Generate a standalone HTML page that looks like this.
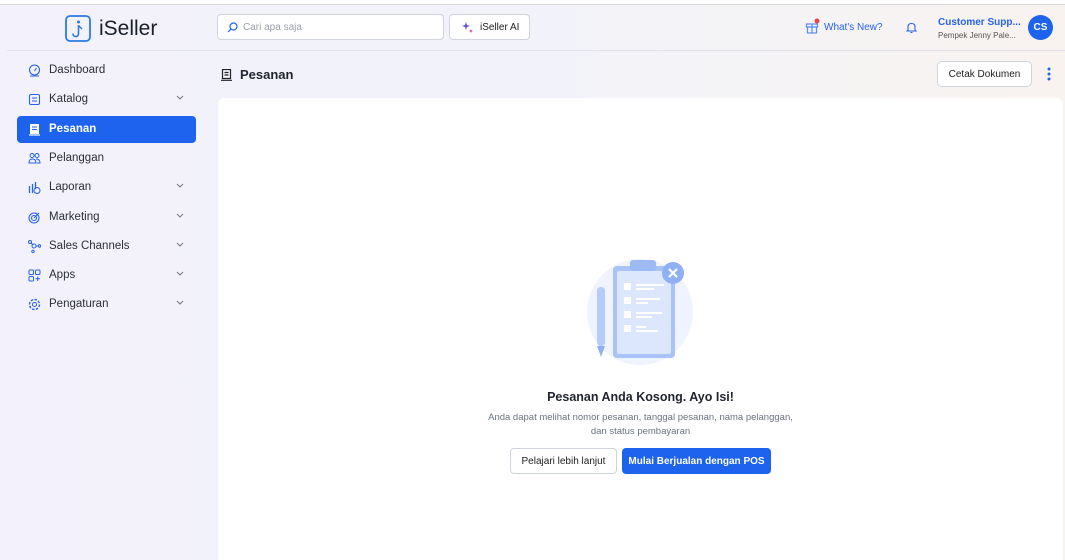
<!DOCTYPE html>
<html><head><meta charset="utf-8"><style>
*{box-sizing:border-box;margin:0;padding:0}
html,body{width:1065px;height:560px;overflow:hidden}
body{font-family:"Liberation Sans",sans-serif;background:linear-gradient(90deg,#f3f1fb 0%,#f2f3fa 50%,#f8f3ef 100%);position:relative;color:#1f2430}
.topline{position:absolute;left:0;top:0;width:1065px;height:5px;background:#fff;border-bottom:1px solid #d8d8d8}
.hsep{position:absolute;left:7px;right:0;top:50px;border-top:1px solid #e2e3ea}
.logo{position:absolute;left:65px;top:15px;display:flex;align-items:center;gap:8px;font-size:21px;color:#1a1f2b}
.search{position:absolute;left:217px;top:14px;width:227px;height:26px;background:#fff;border:1px solid #cfd3dc;border-radius:4px;font-size:10px;color:#9aa0ab;padding:7px 0 0 25px}
.ai{position:absolute;left:449px;top:14px;width:81px;height:26px;background:#fff;border:1px solid #cfd3dc;border-radius:4px;font-size:10px;color:#222;padding:7px 0 0 30px}
.wn{position:absolute;left:824px;top:22px;font-size:10px;color:#2563eb}
.cs1{position:absolute;left:938px;top:17px;font-size:10px;font-weight:bold;color:#2563eb}
.cs2{position:absolute;left:938px;top:31px;font-size:8px;color:#555}
.av{position:absolute;left:1028px;top:15px;width:25px;height:25px;border-radius:50%;background:#1d63ed;color:#fff;font-size:10px;font-weight:bold;text-align:center;line-height:25px}
.nav{position:absolute;left:17px;width:179px;height:27px;font-size:11.5px;color:#2b2f38;padding:7px 0 0 32px}
.nav.act{background:#1d63ed;color:#fff;border-radius:4px;font-weight:bold}
.nav svg.ic{position:absolute;left:11px;top:7px}
.nav .ch{position:absolute;left:159px;top:9px}
.title{position:absolute;left:221px;top:67px;font-size:13px;font-weight:bold;display:flex;gap:8px;align-items:center}
.cetak{position:absolute;left:937px;top:61px;width:95px;height:26px;background:#fff;border:1px solid #cfd3dc;border-radius:5px;font-size:10px;display:flex;align-items:center;justify-content:center;color:#222}
.card{position:absolute;left:218px;top:98px;width:845px;height:462px;background:#fff;border-radius:6px 6px 0 0}
.h{position:absolute;left:218px;width:845px;text-align:center}
.btn{position:absolute;top:448px;height:26px;border-radius:4px;font-size:10px;display:flex;align-items:center;justify-content:center}
</style></head><body>
<div class="topline"></div>
<div class="hsep"></div>
<div class="logo"><svg width="26" height="27" viewBox="0 0 26 27"><rect x="1" y="1" width="24" height="25" rx="4" fill="none" stroke="#2a7be4" stroke-width="1.8"/><circle cx="13.5" cy="7" r="1.5" fill="#2a7be4"/><path d="M13.5 10 V18 Q13.5 22 10 21.5 Q8 21 8 18.5" fill="none" stroke="#2a7be4" stroke-width="1.6"/><path d="M14 11 L17 14" stroke="#2a7be4" stroke-width="1.4"/></svg>iSeller</div>
<div class="search"><svg style="position:absolute;left:9px;top:7px" width="11" height="11" viewBox="0 0 11 11"><circle cx="6.5" cy="4.5" r="3.5" fill="none" stroke="#2563eb" stroke-width="1.2"/><path d="M4 7 L1 10" stroke="#2563eb" stroke-width="1.2"/></svg>Cari apa saja</div>
<div class="ai"><svg style="position:absolute;left:12px;top:7px" width="12" height="12" viewBox="0 0 12 12"><path d="M4 0 L5 3 L8 4 L5 5 L4 8 L3 5 L0 4 L3 3Z" fill="#6b4be8"/><path d="M9 7 L9.6 8.4 L11 9 L9.6 9.6 L9 11 L8.4 9.6 L7 9 L8.4 8.4Z" fill="#e2418f"/></svg>iSeller AI</div>
<svg style="position:absolute;left:805px;top:18px" width="15" height="17" viewBox="0 0 15 17"><rect x="1.5" y="6" width="11" height="3" fill="none" stroke="#5b8def" stroke-width="1.2"/><rect x="2.5" y="9" width="9" height="6" fill="none" stroke="#5b8def" stroke-width="1.2"/><path d="M7 6 V15" stroke="#5b8def" stroke-width="1.2"/><circle cx="12" cy="3" r="2.5" fill="#e84545"/></svg>
<div class="wn">What's New?</div>
<svg style="position:absolute;left:906px;top:22px" width="11" height="12" viewBox="0 0 11 12"><path d="M2 8 V5 Q2 1.5 5.5 1.5 Q9 1.5 9 5 V8 L10 9 H1 Z" fill="none" stroke="#2563eb" stroke-width="1.1"/><path d="M4.5 10.5 H6.5" stroke="#2563eb" stroke-width="1.1"/></svg>
<div class="cs1">Customer Supp...</div>
<div class="cs2">Pempek Jenny Pale...</div>
<div class="av">CS</div>

<div class="nav" style="top:57px"><svg class="ic" width="13" height="13" viewBox="0 0 13 13"><circle cx="6.5" cy="6" r="5" fill="none" stroke="#2563eb" stroke-width="1.1"/><path d="M6.5 7 L8.5 4 M2 12 H11" stroke="#2563eb" stroke-width="1.1"/></svg>Dashboard</div>
<div class="nav" style="top:86px"><svg class="ic" width="13" height="13" viewBox="0 0 13 13"><rect x="1.5" y="1.5" width="10" height="10" rx="1.5" fill="none" stroke="#2563eb" stroke-width="1.1"/><path d="M4 5 H9 M4 8 H9" stroke="#2563eb" stroke-width="1.1"/></svg>Katalog<svg class="ch" width="8" height="5" viewBox="0 0 8 5"><path d="M1 1 L4 4 L7 1" fill="none" stroke="#777" stroke-width="1"/></svg></div>
<div class="nav act" style="top:116px"><svg class="ic" width="13" height="13" viewBox="0 0 13 13"><rect x="2" y="1" width="9" height="10" fill="#fff"/><path d="M1 12 H12" stroke="#fff" stroke-width="1.2"/><path d="M4 4 H9 M4 6.5 H9" stroke="#1d63ed" stroke-width="1"/></svg>Pesanan</div>
<div class="nav" style="top:145px"><svg class="ic" width="13" height="13" viewBox="0 0 13 13"><circle cx="4" cy="3.5" r="2" fill="none" stroke="#2563eb" stroke-width="1"/><circle cx="9" cy="3.5" r="2" fill="none" stroke="#2563eb" stroke-width="1"/><path d="M1 11 Q1 7 4.5 7 Q8 7 8 11 Z M8 7 Q12 7 12 11 H9" fill="none" stroke="#2563eb" stroke-width="1"/></svg>Pelanggan</div>
<div class="nav" style="top:174px"><svg class="ic" width="13" height="13" viewBox="0 0 13 13"><path d="M1.5 5 V12 M4.5 3 V12 M7.5 1 V8" stroke="#2563eb" stroke-width="1.3"/><circle cx="9" cy="9.5" r="3" fill="none" stroke="#2563eb" stroke-width="1"/></svg>Laporan<svg class="ch" width="8" height="5" viewBox="0 0 8 5"><path d="M1 1 L4 4 L7 1" fill="none" stroke="#777" stroke-width="1"/></svg></div>
<div class="nav" style="top:204px"><svg class="ic" width="13" height="13" viewBox="0 0 13 13"><circle cx="6" cy="7" r="5" fill="none" stroke="#2563eb" stroke-width="1.1"/><circle cx="6" cy="7" r="2.5" fill="none" stroke="#2563eb" stroke-width="1.1"/><path d="M6 7 L11 2" stroke="#2563eb" stroke-width="1.1"/></svg>Marketing<svg class="ch" width="8" height="5" viewBox="0 0 8 5"><path d="M1 1 L4 4 L7 1" fill="none" stroke="#777" stroke-width="1"/></svg></div>
<div class="nav" style="top:233px"><svg class="ic" width="13" height="13" viewBox="0 0 13 13"><circle cx="2" cy="2" r="1.5" fill="none" stroke="#2563eb"/><circle cx="6" cy="6" r="2" fill="none" stroke="#2563eb"/><circle cx="11.5" cy="6" r="1.2" fill="none" stroke="#2563eb"/><circle cx="5" cy="11.5" r="1.2" fill="none" stroke="#2563eb"/><path d="M3 3 L5 5 M8 6 H10" stroke="#2563eb"/></svg>Sales Channels<svg class="ch" width="8" height="5" viewBox="0 0 8 5"><path d="M1 1 L4 4 L7 1" fill="none" stroke="#777" stroke-width="1"/></svg></div>
<div class="nav" style="top:262px"><svg class="ic" width="13" height="13" viewBox="0 0 13 13"><rect x="1" y="1" width="4.5" height="4.5" rx="1" fill="none" stroke="#2563eb"/><rect x="7.5" y="1" width="4.5" height="4.5" rx="1" fill="none" stroke="#2563eb"/><rect x="1" y="7.5" width="4.5" height="4.5" rx="1" fill="none" stroke="#2563eb"/><path d="M9.7 7.5 V12 M7.5 9.7 H12" stroke="#2563eb"/></svg>Apps<svg class="ch" width="8" height="5" viewBox="0 0 8 5"><path d="M1 1 L4 4 L7 1" fill="none" stroke="#777" stroke-width="1"/></svg></div>
<div class="nav" style="top:291px"><svg class="ic" width="13" height="13" viewBox="0 0 13 13"><circle cx="6.5" cy="6.5" r="5" fill="none" stroke="#2563eb" stroke-width="1.4" stroke-dasharray="2.5 1.4"/><circle cx="6.5" cy="6.5" r="2" fill="none" stroke="#2563eb"/></svg>Pengaturan<svg class="ch" width="8" height="5" viewBox="0 0 8 5"><path d="M1 1 L4 4 L7 1" fill="none" stroke="#777" stroke-width="1"/></svg></div>

<div class="title"><svg width="11" height="12" viewBox="0 0 11 12"><rect x="1.5" y="0.5" width="8" height="9" fill="none" stroke="#222" stroke-width="1.2"/><path d="M3.5 3.5 H7.5 M3.5 6 H7.5 M0 11.3 H11" stroke="#222" stroke-width="1.2"/></svg>Pesanan</div>
<div class="cetak">Cetak Dokumen</div>
<svg style="position:absolute;left:1047px;top:67px" width="4" height="14" viewBox="0 0 4 14"><circle cx="2" cy="2" r="1.5" fill="#2563eb"/><circle cx="2" cy="7" r="1.5" fill="#2563eb"/><circle cx="2" cy="12" r="1.5" fill="#2563eb"/></svg>
<div class="card"></div>
<svg style="position:absolute;left:585px;top:258px" width="112" height="110" viewBox="0 0 112 110">
<circle cx="55" cy="54" r="53" fill="#eef3fe"/>
<rect x="12" y="29" width="8" height="59" rx="3.5" fill="#b7cdf9"/><path d="M12 88 L16 99 L20 88Z" fill="#8fb0f3"/>
<rect x="28" y="8" width="62" height="92" rx="4" fill="#a9c3f7"/>
<rect x="32" y="13" width="54" height="83" rx="2" fill="#dce7fd"/>
<rect x="45" y="2" width="26" height="11" rx="3" fill="#9dbaf4"/>
<g fill="#fff"><rect x="39" y="25" width="7" height="7"/><rect x="39" y="39" width="7" height="7"/><rect x="39" y="53" width="7" height="7"/><rect x="39" y="67" width="7" height="7"/>
<rect x="51" y="26" width="28" height="2"/><rect x="51" y="30" width="18" height="2"/><rect x="51" y="40" width="24" height="2"/><rect x="51" y="44" width="12" height="2"/><rect x="51" y="54" width="26" height="2"/><rect x="51" y="58" width="16" height="2"/><rect x="51" y="68" width="10" height="2"/><rect x="51" y="72" width="22" height="2"/></g>
<circle cx="88" cy="15" r="11" fill="#8fb0f3"/><path d="M84 11 L92 19 M92 11 L84 19" stroke="#fff" stroke-width="2.2"/>
</svg>
<div class="h" style="top:390px;font-size:12.5px;font-weight:bold;color:#1f2430">Pesanan Anda Kosong. Ayo Isi!</div>
<div class="h" style="top:411px;font-size:9.5px;color:#6b7280;line-height:14px">Anda dapat melihat nomor pesanan, tanggal pesanan, nama pelanggan,<br>dan status pembayaran</div>
<div class="btn" style="left:510px;width:107px;background:#fff;border:1px solid #cfd3dc;color:#222">Pelajari lebih lanjut</div>
<div class="btn" style="left:622px;width:149px;background:#1d63ed;color:#fff;font-weight:bold">Mulai Berjualan dengan POS</div>
</body></html>
